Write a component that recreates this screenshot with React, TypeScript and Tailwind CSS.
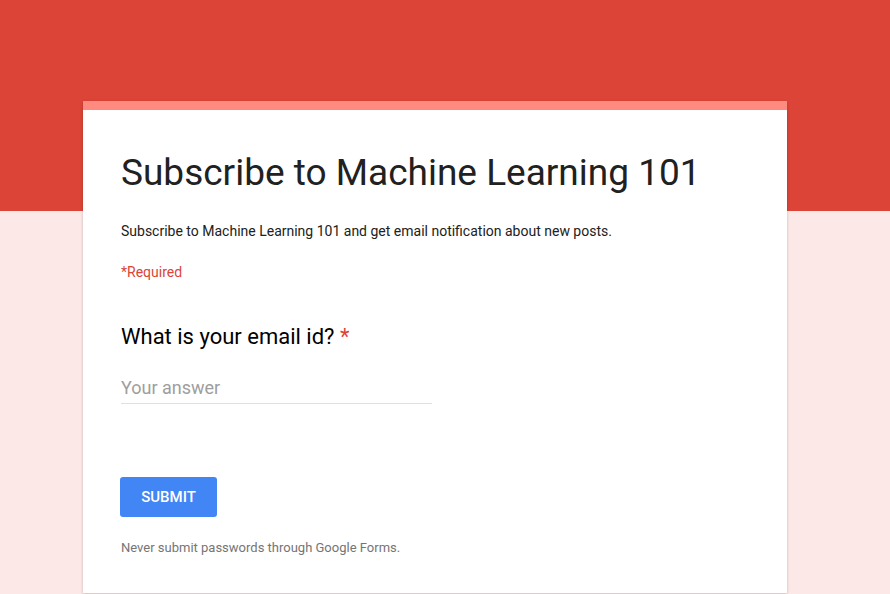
export default function App() {
  return (
    <div className="relative min-h-[594px] w-[890px] overflow-hidden bg-[#fce8e6] font-['Roboto',sans-serif]">
      <div className="absolute left-0 right-0 top-0 h-[211px] bg-[#db4437]" />
      <div className="relative ml-[83px] mt-[101px] w-[704px] bg-white shadow-[0_1px_3px_rgba(0,0,0,0.2)]">
        <div className="h-[9px] bg-[#ff8a80]" />
        <div className="px-[38px] pb-[36px] pt-[41px]">
          <h1 className="text-[37px] leading-[44px] text-[#212121]">Subscribe to Machine Learning 101</h1>
          <p className="mt-[26px] text-[14px] leading-[20px] text-[#212121]">
            Subscribe to Machine Learning 101 and get email notification about new posts.
          </p>
          <p className="mt-[21px] text-[14px] leading-[20px] text-[#db4437]">*Required</p>
          <div className="mt-[42px] text-[22px] leading-[26px] text-black">
            What is your email id? <span className="text-[#db4437]">*</span>
          </div>
          <div className="mt-[25px] w-[311px] border-b border-[#e0e0e0] pb-[3px] text-[18px] leading-[25px] text-[#9e9e9e]">
            Your answer
          </div>
          <button className="-ml-px mt-[73px] flex h-[40px] w-[97px] items-center justify-center rounded-[3px] bg-[#4285f4] text-[15px] font-medium text-white">
            SUBMIT
          </button>
          <p className="mt-[22px] text-[13px] leading-[18px] text-[#757575]">
            Never submit passwords through Google Forms.
          </p>
        </div>
      </div>
    </div>
  );
}
